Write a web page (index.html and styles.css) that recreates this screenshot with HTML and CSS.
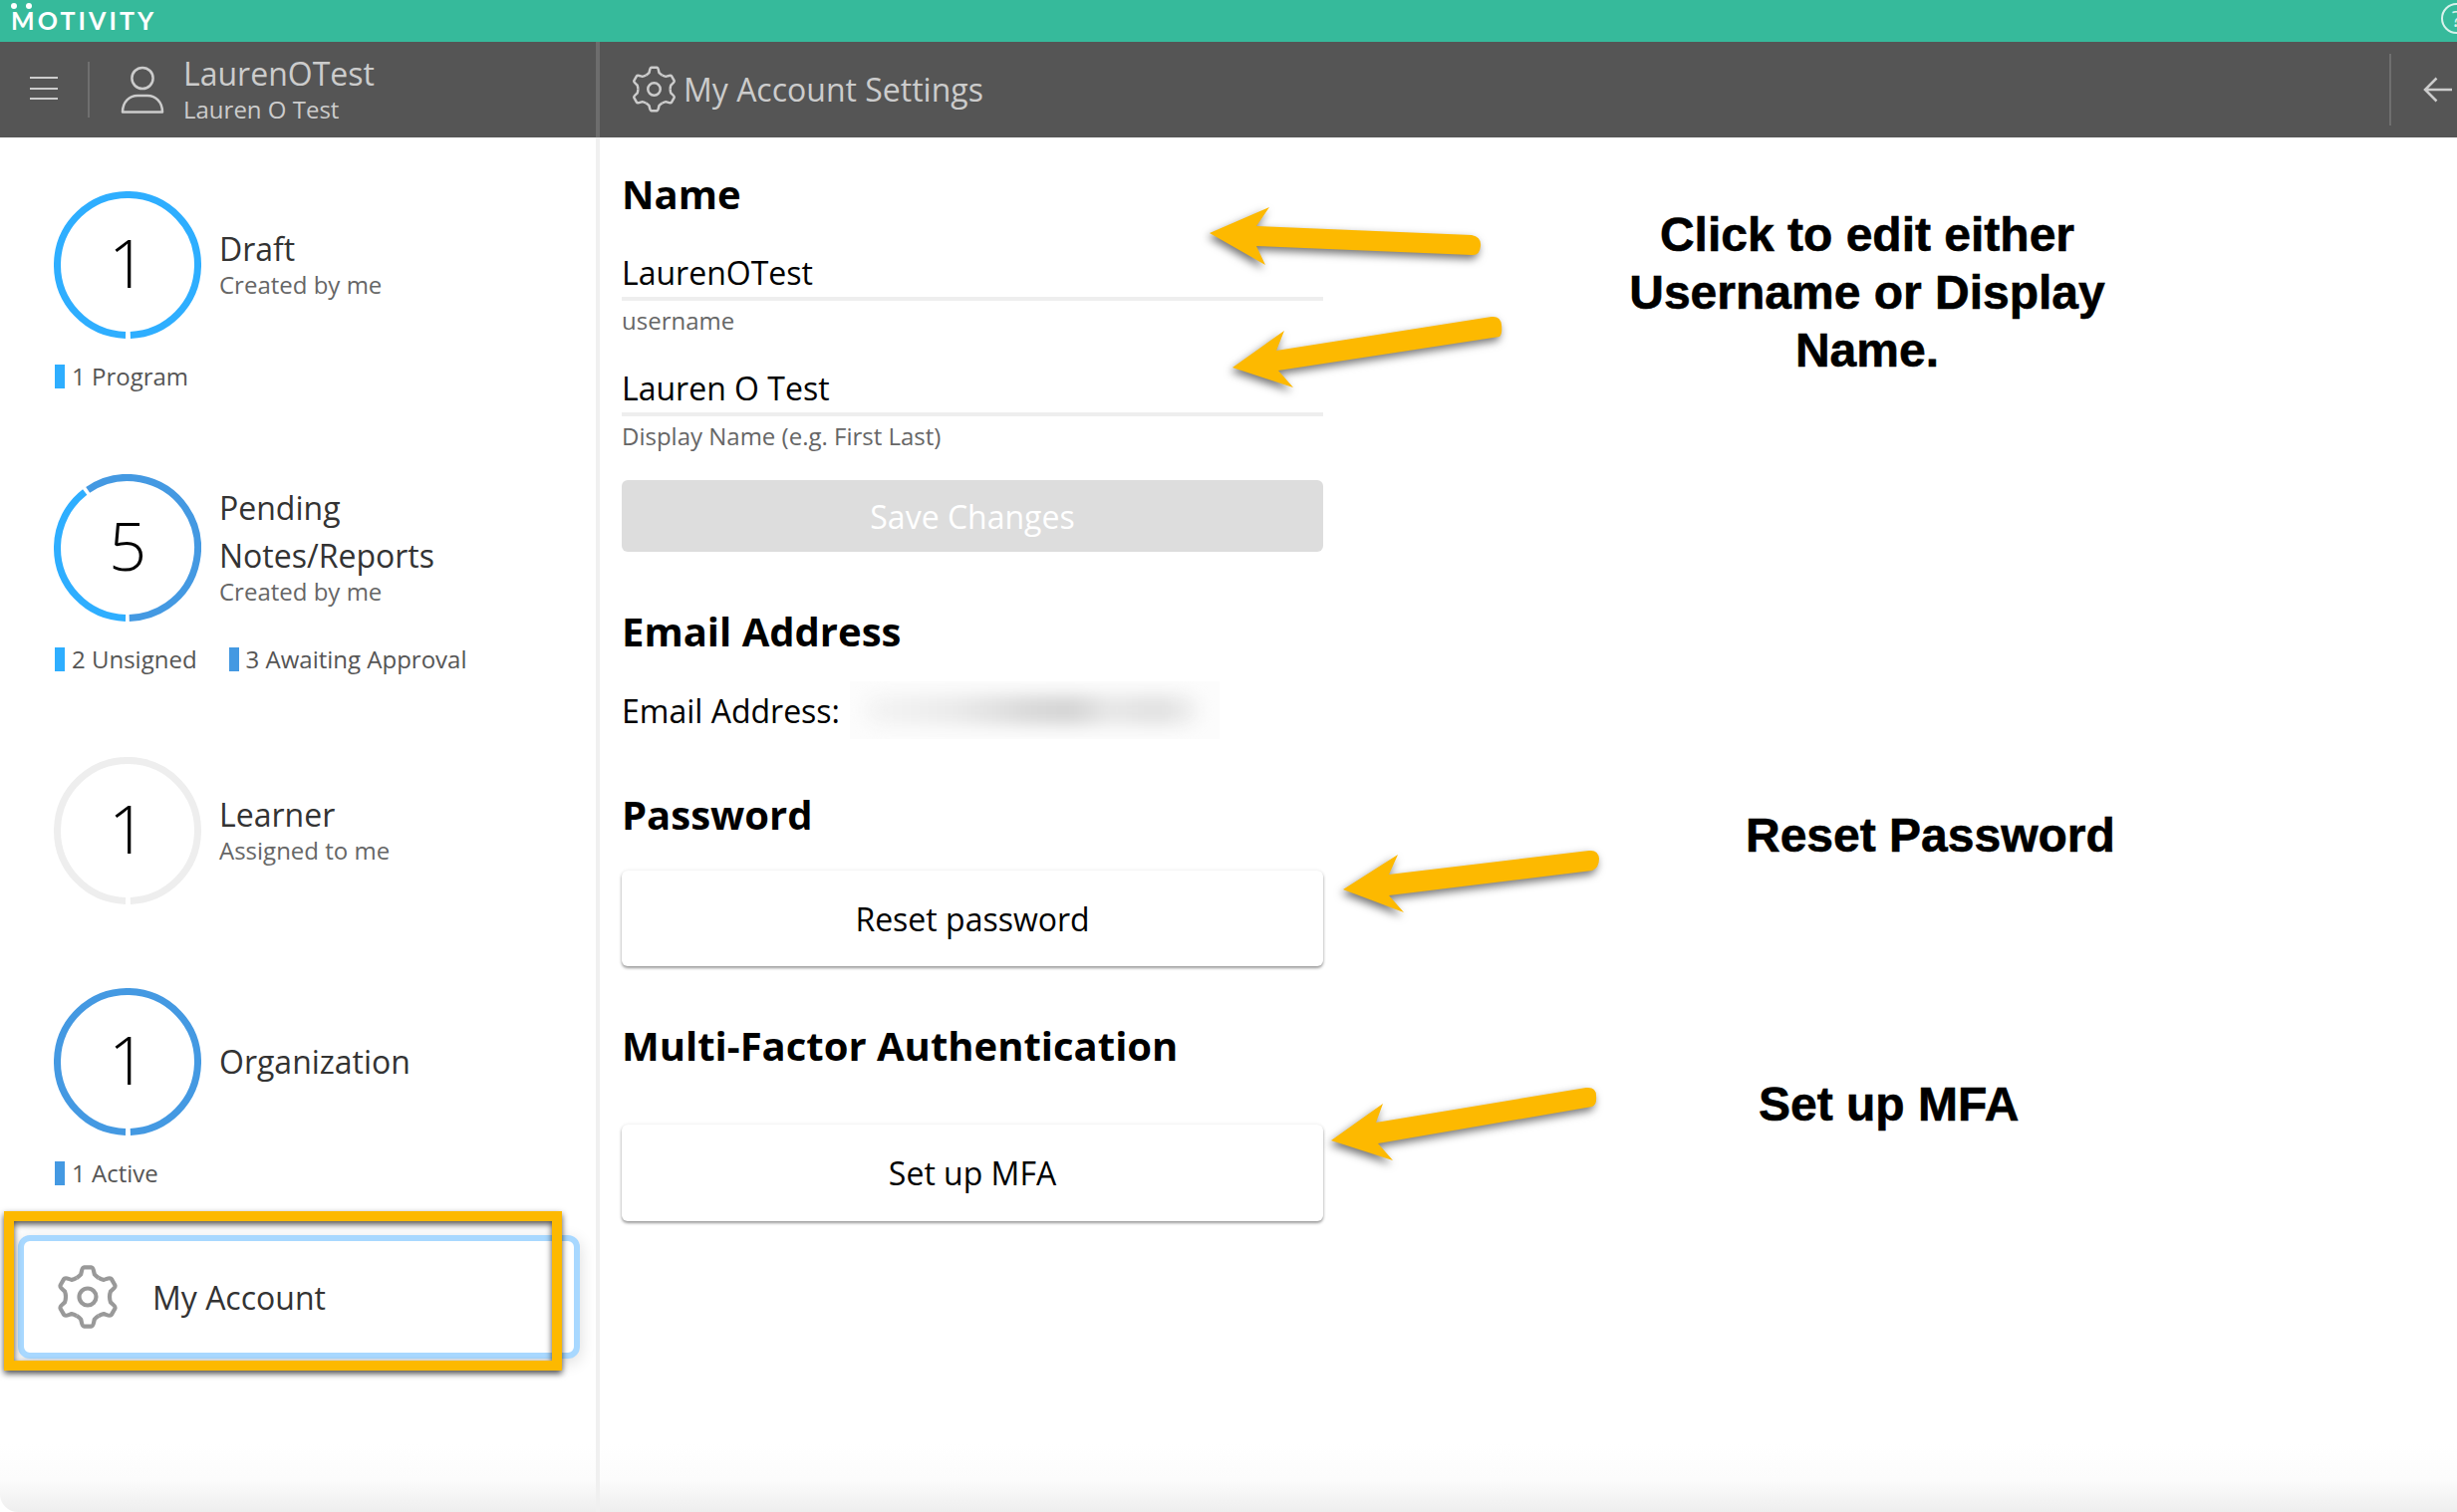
FILE: index.html
```html
<!DOCTYPE html>
<html lang="en">
<head>
<meta charset="utf-8">
<title>My Account Settings</title>
<link rel="stylesheet" href="styles.css">
</head>
<body>
<svg class="defs" width="0" height="0" aria-hidden="true">
  <symbol id="gear" viewBox="-32 -32 64 64">
    <g fill="none" stroke-linejoin="round">
      <path d="M-11 -19.05Q-8 -21 -6.87 -22.47C-6 -25 -6 -29.6 -3.5 -29.6L3.5 -29.6C6 -29.6 6 -25 6.87 -22.47Q8 -21 11 -19.05"/>
      <path transform="rotate(60)" d="M-11 -19.05Q-8 -21 -6.87 -22.47C-6 -25 -6 -29.6 -3.5 -29.6L3.5 -29.6C6 -29.6 6 -25 6.87 -22.47Q8 -21 11 -19.05"/>
      <path transform="rotate(120)" d="M-11 -19.05Q-8 -21 -6.87 -22.47C-6 -25 -6 -29.6 -3.5 -29.6L3.5 -29.6C6 -29.6 6 -25 6.87 -22.47Q8 -21 11 -19.05"/>
      <path transform="rotate(180)" d="M-11 -19.05Q-8 -21 -6.87 -22.47C-6 -25 -6 -29.6 -3.5 -29.6L3.5 -29.6C6 -29.6 6 -25 6.87 -22.47Q8 -21 11 -19.05"/>
      <path transform="rotate(240)" d="M-11 -19.05Q-8 -21 -6.87 -22.47C-6 -25 -6 -29.6 -3.5 -29.6L3.5 -29.6C6 -29.6 6 -25 6.87 -22.47Q8 -21 11 -19.05"/>
      <path transform="rotate(300)" d="M-11 -19.05Q-8 -21 -6.87 -22.47C-6 -25 -6 -29.6 -3.5 -29.6L3.5 -29.6C6 -29.6 6 -25 6.87 -22.47Q8 -21 11 -19.05"/>
      <circle r="8.5"/>
    </g>
  </symbol>
</svg>

<div class="app">
  <div class="brandbar">
    <div class="logo"><span class="logo-dot"></span><span class="logo-dot logo-dot-b"></span>MOTIVITY</div>
    <div class="help">?</div>
  </div>

  <header class="topbar">
    <div class="topbar-left">
      <div class="burger"><span></span><span></span><span></span></div>
      <div class="vrule"></div>
      <svg class="user-icon" viewBox="0 0 44 48" fill="none">
        <circle cx="22" cy="12.500" r="10.600"/>
        <path d="M2 46.500C2 36 9 30 17 30L27 30C35 30 42 36 42 46.500Z" stroke-linejoin="round"/>
      </svg>
      <div class="who">
        <div class="who-name">LaurenOTest</div>
        <div class="who-display">Lauren O Test</div>
      </div>
    </div>
    <div class="topbar-main">
      <svg class="head-gear"><use href="#gear"/></svg>
      <div class="page-title">My Account Settings</div>
      <div class="back">
        <svg class="back-arrow" viewBox="0 0 30 26" fill="none">
          <path d="M29 13H2M13.500 1.500L2 13L13.500 24.500"/>
        </svg>
      </div>
    </div>
  </header>

  <div class="body">
    <aside class="sidebar">
      <section class="stat stat-draft">
        <div class="stat-top">
          <div class="ring">
            <svg viewBox="0 0 148 148" fill="none">
              <circle class="seg-a" cx="74" cy="74" r="70.500" pathLength="360" stroke-dasharray="356 4" transform="rotate(91.600 74 74)"/>
            </svg>
            <span class="ring-num">1</span>
          </div>
          <div class="stat-text">
            <div class="stat-title">Draft</div>
            <div class="stat-sub">Created by me</div>
          </div>
        </div>
        <div class="legend">
          <div class="legend-item"><i class="bar bar-a"></i>1 Program</div>
        </div>
      </section>

      <section class="stat stat-pending">
        <div class="stat-top">
          <div class="ring">
            <svg viewBox="0 0 148 148" fill="none">
              <circle class="seg-a" cx="74" cy="74" r="70.500" pathLength="360" stroke-dasharray="141 219" transform="rotate(91.600 74 74)"/>
              <circle class="seg-b" cx="74" cy="74" r="70.500" pathLength="360" stroke-dasharray="213 147" transform="rotate(235.600 74 74)"/>
            </svg>
            <span class="ring-num">5</span>
          </div>
          <div class="stat-text">
            <div class="stat-title">Pending<br>Notes/Reports</div>
            <div class="stat-sub">Created by me</div>
          </div>
        </div>
        <div class="legend">
          <div class="legend-item"><i class="bar bar-a"></i>2 Unsigned</div>
          <div class="legend-item"><i class="bar bar-b"></i>3 Awaiting Approval</div>
        </div>
      </section>

      <section class="stat stat-learner">
        <div class="stat-top">
          <div class="ring">
            <svg viewBox="0 0 148 148" fill="none">
              <circle class="seg-c" cx="74" cy="74" r="70.500" pathLength="360" stroke-dasharray="356 4" transform="rotate(91.600 74 74)"/>
            </svg>
            <span class="ring-num">1</span>
          </div>
          <div class="stat-text">
            <div class="stat-title">Learner</div>
            <div class="stat-sub">Assigned to me</div>
          </div>
        </div>
      </section>

      <section class="stat stat-org">
        <div class="stat-top">
          <div class="ring">
            <svg viewBox="0 0 148 148" fill="none">
              <circle class="seg-b" cx="74" cy="74" r="70.500" pathLength="360" stroke-dasharray="356 4" transform="rotate(91.600 74 74)"/>
            </svg>
            <span class="ring-num">1</span>
          </div>
          <div class="stat-text stat-text-single">
            <div class="stat-title">Organization</div>
          </div>
        </div>
        <div class="legend">
          <div class="legend-item"><i class="bar bar-b"></i>1 Active</div>
        </div>
      </section>

      <div class="account-card">
        <svg class="card-gear"><use href="#gear"/></svg>
        <span>My Account</span>
      </div>
    </aside>

    <main class="content">
      <h2 class="h-name">Name</h2>
      <div class="field">
        <div class="field-value">LaurenOTest</div>
        <div class="field-label">username</div>
      </div>
      <div class="field field-second">
        <div class="field-value">Lauren O Test</div>
        <div class="field-label">Display Name (e.g. First Last)</div>
      </div>
      <button class="btn-save" type="button">Save Changes</button>

      <h2 class="h-email">Email Address</h2>
      <div class="email-row">
        <span>Email Address:</span>
        <div class="email-blur"><div class="email-blob"></div></div>
      </div>

      <h2 class="h-password">Password</h2>
      <button class="btn-card btn-reset" type="button">Reset password</button>

      <h2 class="h-mfa">Multi-Factor Authentication</h2>
      <button class="btn-card btn-mfa" type="button">Set up MFA</button>
    </main>
  </div>

  <!-- Annotations drawn on top of the screenshot -->
  <div class="yellow-box"></div>
  <svg class="arrows" viewBox="0 0 2466 1518" fill="#fdb900">
    <path d="M1214 234L1274 208L1261 227L1477 236Q1487 238 1486 247Q1485 257 1477 256L1261 247L1270 266Z"/>
    <path d="M1237 369L1289 332L1281 352L1497 318Q1506 317 1507 326Q1508 335 1505 338L1283 372L1298 389Z"/>
    <path d="M1348 893L1403 858L1394 878L1595 854Q1604 853 1605 862Q1605 871 1598 874L1394 899L1409 916Z"/>
    <path d="M1336 1145L1388 1108L1381 1127L1592 1092Q1602 1091 1602 1100Q1603 1109 1598 1111L1383 1148L1398 1165Z"/>
  </svg>
  <div class="note note-edit">Click to edit either<br>Username or Display<br>Name.</div>
  <div class="note note-reset">Reset Password</div>
  <div class="note note-mfa">Set up MFA</div>
</div>
</body>
</html>
```

FILE: styles.css
```css
* { box-sizing: border-box; }
html, body { margin: 0; padding: 0; background: #fff; }
body { font-family: "Open Sans", "Liberation Sans", sans-serif; }
.defs { position: absolute; }

.app {
  position: relative;
  width: 2466px;
  height: 1518px;
  overflow: hidden;
  display: flex;
  flex-direction: column;
  border-radius: 0 0 0 18px;
  background: linear-gradient(to bottom, #fff 0, #fff 1450px, #fcfcfc 1485px, #eeeeee 1518px);
}

/* brand bar */
.brandbar {
  height: 42px;
  background: #36ba9b;
  display: flex;
  align-items: center;
  justify-content: space-between;
  padding-left: 11px;
  flex: none;
}
.logo {
  position: relative;
  font-family: "Lato", sans-serif;
  font-size: 25px;
  font-weight: 700;
  letter-spacing: 3.1px;
  color: #fff;
  line-height: 42px;
  margin-top: -2px;
}
.logo-dot {
  position: absolute;
  left: 0;
  top: 4px;
  width: 6px;
  height: 6px;
  border-radius: 50%;
  background: #fff;
}
.logo-dot-b { left: 15px; }
.help {
  width: 31px;
  height: 31px;
  border: 2px solid #d8f2eb;
  border-radius: 50%;
  margin-right: -15px;
  margin-top: -5px;
  color: #d8f2eb;
  font-size: 22px;
  line-height: 27px;
  text-align: center;
  flex: none;
}

/* dark header */
.topbar {
  height: 96px;
  background: #555;
  display: flex;
  flex: none;
}
.topbar-left {
  width: 602px;
  flex: none;
  display: flex;
  align-items: center;
  padding-left: 30px;
  border-right: 4px solid #6d6d6d;
}
.burger { width: 28px; display: flex; flex-direction: column; gap: 8.5px; margin-top: -3px; }
.burger span { display: block; height: 2px; background: #ccc; }
.vrule { width: 2px; height: 56px; background: #6f6f6f; margin-left: 30px; margin-right: 31px; }
.user-icon { width: 44px; height: 48px; stroke: #ccc; stroke-width: 2.5; margin-right: 19px; overflow: visible; }
.who { color: #ccc; margin-top: -3px; }
.who-name { font-size: 32px; line-height: 42px; }
.who-display { font-size: 24px; line-height: 30px; }

.topbar-main { flex: 1; display: flex; align-items: center; padding-left: 31px; }
.head-gear { width: 47px; height: 47px; stroke: #ccc; stroke-width: 3.4; margin-top: -2px; }
.page-title { font-size: 32px; color: #ccc; margin-left: 6px; margin-top: -2px; }
.back {
  margin-left: auto;
  width: 68px;
  height: 72px;
  border-left: 2px solid #6f6f6f;
  display: flex;
  align-items: center;
  padding-left: 32px;
}
.back-arrow { width: 30px; height: 26px; stroke: #ccc; stroke-width: 2.5; }

/* layout */
.body { flex: 1; display: flex; min-height: 0; }

/* sidebar */
.sidebar {
  width: 602px;
  flex: none;
  border-right: 4px solid #f0f0f0;
  padding: 54px 16px 0 18px;
  color: #333;
}
.stat { margin-left: 36px; }
.stat-pending, .stat-learner { margin-top: 86px; }
.stat-org { margin-top: 84px; }
.stat-top { display: flex; align-items: center; gap: 18px; }
.ring { width: 148px; height: 148px; flex: none; display: grid; place-items: center; }
.ring > * { grid-area: 1 / 1; }
.ring svg { width: 148px; height: 148px; stroke-width: 7; }
.seg-a { stroke: #2eaeff; }
.seg-b { stroke: #4499e2; }
.seg-c { stroke: #eee; }
.ring-num { font-size: 67px; font-weight: 300; color: #000; line-height: 1; margin-bottom: 6px; }
.stat-text { padding-bottom: 4px; }
.stat-text-single { padding-bottom: 0; }
.stat-title { font-size: 32px; line-height: 48px; color: #333; }
.stat-sub { font-size: 24px; line-height: 32px; margin-top: -4px; color: #666; }
.legend { display: flex; gap: 32px; margin-top: 26px; padding-left: 1px; }
.legend-item { display: flex; align-items: center; gap: 7px; font-size: 24px; line-height: 24px; color: #555; }
.bar { display: block; width: 10px; height: 24px; }
.bar-a { background: #2eaeff; }
.bar-b { background: #4499e2; }

.account-card {
  margin-top: 50px;
  width: 564px;
  height: 124px;
  border: 6px solid #a8d8ff;
  border-radius: 12px;
  box-shadow: 0 4px 16px rgba(0, 0, 0, .14);
  background: #fff;
  display: flex;
  align-items: center;
  padding-left: 32px;
  font-size: 32px;
  color: #333;
}
.card-gear { width: 64px; height: 64px; stroke: #999; stroke-width: 4.2; margin-right: 33px; flex: none; }

/* main */
.content { flex: 1; padding: 30px 0 0 22px; }
.content h2 { margin: 0; font-size: 40px; line-height: 54px; font-weight: 700; color: #000; }
.field-value { width: 704px; font-size: 32px; line-height: 44px; color: #000; padding-bottom: 2px; border-bottom: 4px solid #eee; }
.field-label { font-size: 24px; line-height: 32px; color: #666; margin-top: 4px; }
.field { margin-top: 30px; }
.btn-save {
  display: block;
  width: 704px;
  height: 72px;
  margin-top: 28px;
  border: 0;
  border-radius: 6px;
  background: #ddd;
  color: #fff;
  font: 400 32px "Open Sans", sans-serif;
}
.content .h-email { margin-top: 53px; }
.email-row { display: flex; align-items: center; height: 44px; margin-top: 30px; font-size: 32px; color: #000; }
.email-blur { width: 371px; height: 58px; margin-left: 10px; background: #fcfcfc; overflow: hidden; flex: none; }
.email-blob {
  width: 336px;
  height: 30px;
  margin: 14px 0 0 14px;
  border-radius: 15px;
  background: linear-gradient(to right, #f5f5f5, #eaeaea 28%, #d8d8d8 50%, #d4d4d4 62%, #e8e8e8 74%, #e0e0e0 88%, #f2f2f2);
  filter: blur(8px);
}
.content .h-password { margin-top: 56px; }
.btn-card {
  display: block;
  width: 704px;
  border: 0;
  border-radius: 6px;
  background: #fff;
  color: #000;
  font: 400 32px "Open Sans", sans-serif;
  box-shadow: 0 2px 3px rgba(0, 0, 0, .38), 0 0 4px rgba(0, 0, 0, .07);
}
.btn-reset { height: 96px; margin-top: 29px; }
.content .h-mfa { margin-top: 53px; }
.btn-mfa { height: 97px; margin-top: 52px; }

/* annotations */
.yellow-box {
  position: absolute;
  left: 4px;
  top: 1216px;
  width: 560px;
  height: 160px;
  border: 10px solid #fdb900;
  filter: drop-shadow(0 3px 3px rgba(0, 0, 0, .7));
}
.arrows {
  position: absolute;
  left: 0;
  top: 0;
  width: 2466px;
  height: 1518px;
  filter: drop-shadow(-2px 4px 4px rgba(0, 0, 0, .55));
  pointer-events: none;
}
.note {
  position: absolute;
  font-family: "Liberation Sans", Arial, sans-serif;
  font-weight: 700;
  font-size: 48px;
  line-height: 58px;
  color: #000;
  -webkit-text-stroke: .6px #000;
}
.note-edit { left: 1574px; top: 207px; width: 600px; text-align: center; }
.note-reset { left: 1752px; top: 810px; }
.note-mfa { left: 1765px; top: 1080px; }
```
